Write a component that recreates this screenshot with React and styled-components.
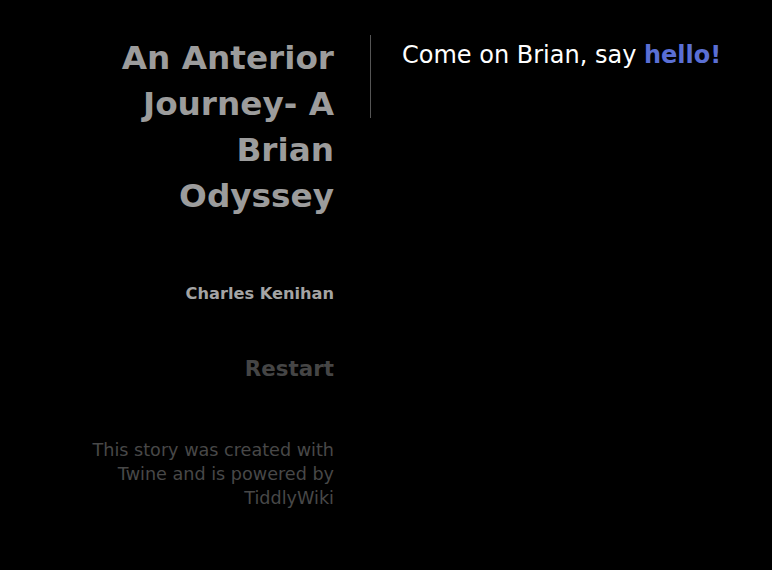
import React from "react";
import styled, { createGlobalStyle } from "styled-components";

const Global = createGlobalStyle`
  html, body { margin: 0; padding: 0; background: #000; }
  body { font-family: "DejaVu Sans", Verdana, sans-serif; color: #fff; }
`;

const Page = styled.div`
  display: flex;
  align-items: flex-start;
  padding: 35px 0 0 84px;
  min-height: 570px;
  box-sizing: border-box;
  background: #000;
`;

const Sidebar = styled.div`
  width: 250px;
  flex: none;
  text-align: right;
  display: flex;
  flex-direction: column;
`;

const Title = styled.h1`
  margin: 0;
  font-size: 32.7px;
  line-height: 46px;
  font-weight: bold;
  color: #9c9c9c;
`;

const Author = styled.div`
  margin-top: 65px;
  font-size: 16.2px;
  line-height: 20px;
  font-weight: bold;
  color: #a4a4a4;
`;

const Restart = styled.a`
  display: block;
  margin-top: 52px;
  font-size: 21.4px;
  line-height: 26px;
  font-weight: bold;
  color: #454545;
  cursor: pointer;
`;

const Credits = styled.div`
  margin-top: 56px;
  font-size: 17.6px;
  line-height: 24px;
  color: #484848;
`;

const Passage = styled.div`
  margin-left: 36px;
  margin-top: 0;
  border-left: 1px solid #555;
  padding: 2px 0 45px 31px;
  font-size: 24px;
  line-height: 36px;
  color: #fff;
`;

const Link = styled.a`
  color: #5a6fd4;
  font-weight: bold;
  cursor: pointer;
`;

export default function App() {
  return (
    <>
      <Global />
      <Page>
        <Sidebar>
          <Title>An Anterior Journey- A Brian Odyssey</Title>
          <Author>Charles Kenihan</Author>
          <Restart>Restart</Restart>
          <Credits>This story was created with Twine and is powered by TiddlyWiki</Credits>
        </Sidebar>
        <Passage>
          Come on Brian, say <Link>hello!</Link>
        </Passage>
      </Page>
    </>
  );
}
